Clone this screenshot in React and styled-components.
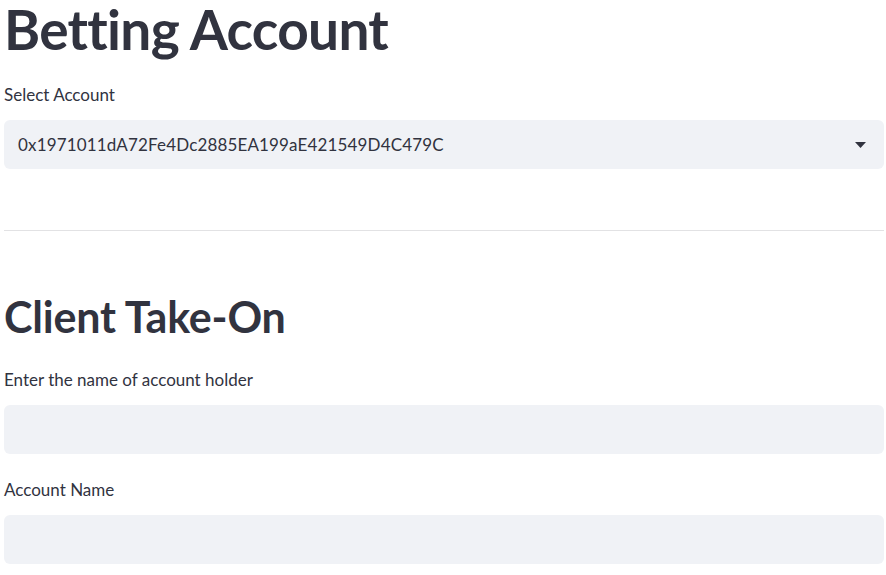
import React from 'react'
import styled, { createGlobalStyle } from 'styled-components'

const GlobalStyle = createGlobalStyle`
  html, body {
    margin: 0;
    padding: 0;
    background: #ffffff;
  }
  body {
    font-family: Lato, 'Noto Sans', sans-serif;
    color: #31333f;
  }
`

const Page = styled.div`
  display: flex;
  flex-direction: column;
  padding: 0 2px 0 4px;
`

const Title = styled.h1`
  margin: -2px 0 0 0;
  font-size: 55px;
  font-weight: 700;
  line-height: 62px;
  letter-spacing: -0.7px;
  color: #31333f;
`

const Subtitle = styled.h2`
  margin: 64px 0 0 0;
  font-size: 43px;
  font-weight: 700;
  line-height: 44px;
  letter-spacing: -0.2px;
  color: #31333f;
`

const Label = styled.label`
  display: block;
  font-size: 17px;
  line-height: 20px;
  margin: ${(p) => p.$top || 0}px 0 0 0;
  color: #31333f;
`

const Field = styled.div`
  display: flex;
  align-items: center;
  justify-content: space-between;
  height: 49px;
  margin-top: 15px;
  padding: 0 18px 0 14px;
  background: #f0f2f6;
  border-radius: 6px;
  font-size: 17px;
  letter-spacing: 0.15px;
  color: #31333f;
`

const Divider = styled.hr`
  width: 100%;
  margin: 61px 0 0 0;
  border: none;
  border-top: 1px solid #e2e2e4;
`

const Caret = () => (
  <svg width="11" height="6" viewBox="0 0 11 6">
    <path d="M0 0 L11 0 L5.5 6 Z" fill="#31333f" />
  </svg>
)

const App = () => (
  <>
    <GlobalStyle />
    <Page>
      <Title>Betting Account</Title>
      <Label $top={25}>Select Account</Label>
      <Field>
        <span>0x1971011dA72Fe4Dc2885EA199aE421549D4C479C</span>
        <Caret />
      </Field>
      <Divider />
      <Subtitle>Client Take-On</Subtitle>
      <Label $top={31}>Enter the name of account holder</Label>
      <Field />
      <Label $top={26}>Account Name</Label>
      <Field />
    </Page>
  </>
)

export default App
